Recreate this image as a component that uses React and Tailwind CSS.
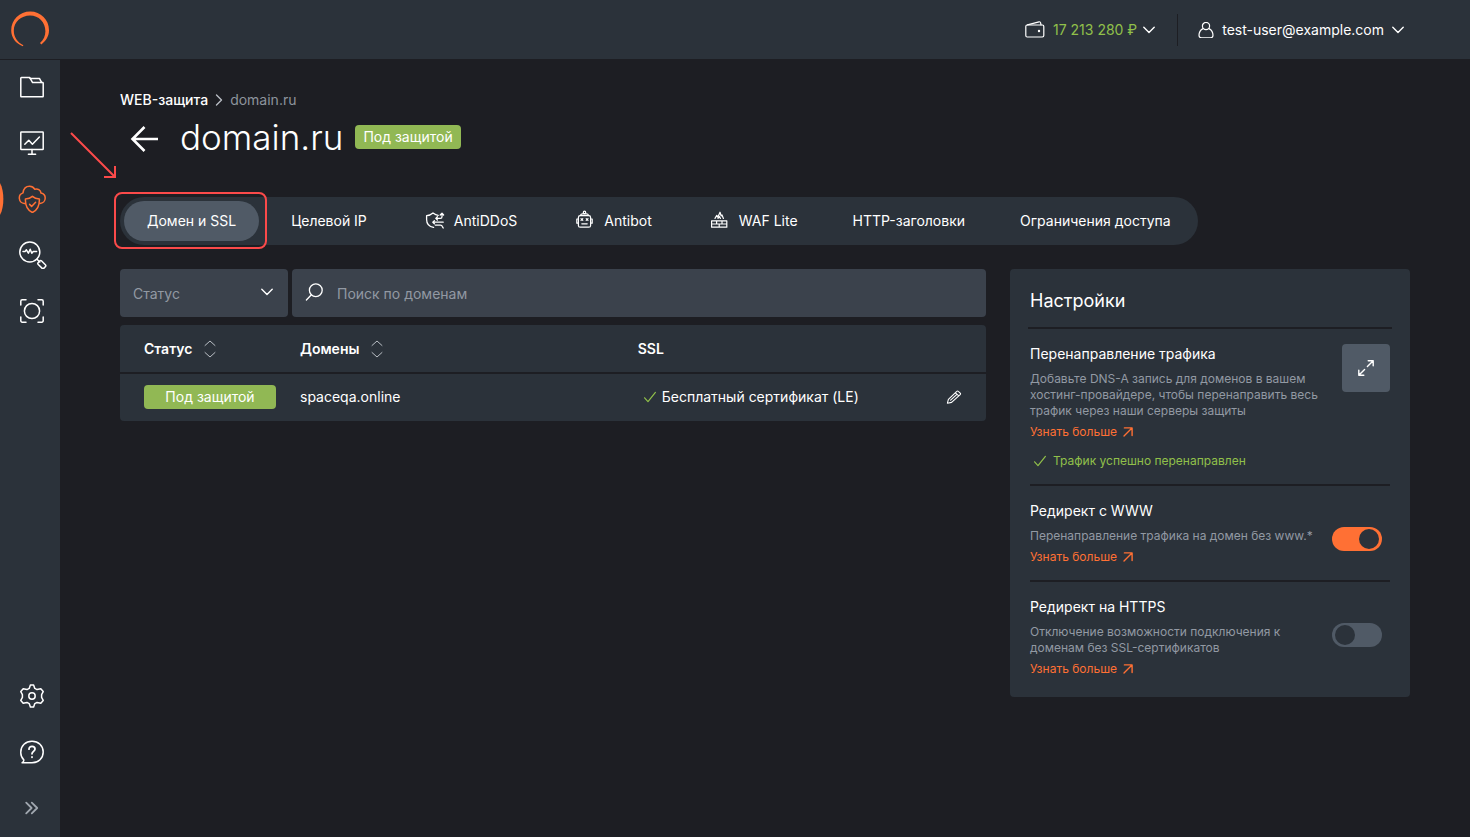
import { useState } from 'react';

function Icon({ size = 'size-6', box = 24, width = 1.5, className = '', children }) {
  return (
    <svg
      className={`shrink-0 ${size} ${className}`}
      viewBox={`0 0 ${box} ${box}`}
      fill="none"
      stroke="currentColor"
      strokeWidth={width}
      strokeLinecap="round"
      strokeLinejoin="round"
      aria-hidden="true"
    >
      {children}
    </svg>
  );
}

const ChevronDown = ({ className }) => (
  <Icon size="size-3" box={12} width={1.4} className={className}>
    <path d="M0.8 3.2 6 8.4l5.2-5.2" />
  </Icon>
);

const Check = ({ className }) => (
  <Icon size="size-3" box={12} width={1.2} className={className}>
    <path d="M0.6 6.8 4 10.6 11.4 1.4" />
  </Icon>
);

const topNav = [
  {
    name: 'Проекты',
    icon: (
      <Icon>
        <path d="M.8 21.2V3.200a.6.6 0 0 1 .6-.6h8.400l2.800 5h10a.6.6 0 0 1 .6.6v13a.6.6 0 0 1-.6.6H1.400a.6.6 0 0 1-.6-.6Z" />
        <path d="M10 3.400h9.400L21.600 7.400" />
      </Icon>
    ),
  },
  {
    name: 'Мониторинг',
    icon: (
      <Icon>
        <rect x=".8" y="1" width="22.4" height="17.6" rx=".6" />
        <path d="M12 18.6v4.2M8.4 23.200h7.200M4.800 13.200l4-4 3.600 4L19.400 6" />
      </Icon>
    ),
  },
  {
    name: 'WEB-защита',
    active: true,
    icon: (
      <Icon size="size-7" box={28} className="-ml-0.5">
        <path d="M7.400 18.400H6.400A5.400 5.400 0 0 1 5 7.900C5.600 3.600 8.400 1.300 11.600 1.300c2.400 0 4 1.100 5 2.900 3-1 6.200.8 6.400 3.900 2.700.6 4.200 2.600 4.200 5 0 2.900-2.200 5.300-5.200 5.300" />
        <path d="M14.400 11.400c1.800 1.700 4.200 2.500 7 2.500.2 6-1.500 11.200-7 13.600-5.500-2.400-7.200-7.600-7-13.600 2.800 0 5.200-.8 7-2.500Z" />
        <path d="m11.600 19.400 2 2 4-4.200" />
      </Icon>
    ),
  },
  {
    name: 'Анализ',
    icon: (
      <Icon size="size-7" box={28} className="-ml-px">
        <circle cx="10.8" cy="11" r="10" />
        <path d="m18 18.200 2.800 2.800M4 10.600h2l1.400-1.800 2 3.400 1.800-4 1.600 4 1.400-1.600h3.400" />
        <rect x="20.400" y="19.600" width="4.800" height="8" rx="1.400" transform="rotate(-45 22.800 23.600)" />
      </Icon>
    ),
  },
  {
    name: 'Сканер',
    icon: (
      <Icon>
        <circle cx="12" cy="12" r="7.6" />
        <path d="M.8 6V2.200A1.400 1.400 0 0 1 2.200.8H6M18 .8h3.800a1.400 1.400 0 0 1 1.400 1.400V6M23.200 18v3.800a1.400 1.400 0 0 1-1.400 1.400H18M6 23.200H2.200a1.400 1.400 0 0 1-1.400-1.400V18" />
      </Icon>
    ),
  },
];

const bottomNav = [
  {
    name: 'Настройки аккаунта',
    icon: (
      <Icon>
        <path d="M10.400 1h3.200l1.200 3.400L17 5.600l3.800-.8 2.400 2.800-1.600 3v2.800l1.600 3-2.400 2.800-3.800-.8-2.200 1.200-1.200 3.400h-3.200l-1.200-3.400L7 18.400l-3.800.8-2.400-2.800 1.600-3v-2.800l-1.600-3 2.400-2.800 3.800.8 2.200-1.200Z" />
        <circle cx="12" cy="12" r="3.200" />
      </Icon>
    ),
  },
  {
    name: 'Помощь',
    icon: (
      <Icon>
        <path d="M2 22.800c1.500-.8 2-1.600 1.800-2.900A10 10 0 0 1 .8 12C.8 5.800 5.600 1.200 12 1.200S23.200 5.800 23.200 12 18.400 22.800 12 22.800Z" />
        <path strokeWidth="1.8" d="M9 9.200C9 7.400 10.200 6.400 12 6.400s3 1 3 2.700c0 2.200-3 2.300-3 4.700M12 17v.3" />
      </Icon>
    ),
  },
  {
    name: 'Развернуть меню',
    muted: true,
    icon: (
      <Icon width={1.8}>
        <path d="m6.200 6.600 5.400 5.400-5.400 5.400M11.800 6.600l5.400 5.400-5.400 5.400" />
      </Icon>
    ),
  },
];

const tabs = [
  { name: 'Домен и SSL' },
  { name: 'Целевой IP' },
  {
    name: 'AntiDDoS',
    icon: (
      <Icon width={1.3}>
        <path d="M11.600 18.400C7.400 17.600 4.600 14.400 4.600 10.400V6.600c2.600 0 4.600-1 6.400-2.600 1.800 1.400 3.200 2.200 5.200 2.400" />
        <path d="M18.200 6l1.800-1.800L21.600 6M20 4.400v3.400c0 1-.6 1.600-1.600 1.600h-4.600M15.400 7.800l-1.600 1.600 1.600 1.600" />
        <path d="M10.800 13.200h10.400M12.400 11.600l-1.600 1.600 1.600 1.600M13.400 16.200h5c1 0 1.600.4 2 1.400l.8 1.400" />
      </Icon>
    ),
  },
  {
    name: 'Antibot',
    icon: (
      <Icon width={1.2}>
        <rect x="6.400" y="6.600" width="12.200" height="11.600" rx="1.800" />
        <path d="M6.400 10H4.800v4.200h1.600M18.600 10h1.600v4.200h-1.600M9.800 14.800h5.400M9 9.600l1.800 1.800M10.800 9.600 9 11.400M14.200 9.600l1.800 1.800M16 9.600l-1.800 1.800M8.400 6.400c.4-1.200 1-1.600 2-1.600h4.200c1 0 1.600.4 2 1.600" />
        <circle cx="12.500" cy="3.400" r="1.200" />
      </Icon>
    ),
  },
  {
    name: 'WAF Lite',
    icon: (
      <Icon width={1.2}>
        <path d="M4.600 11.800h15.200v6.400H4.600ZM4.600 15h15.200M9.600 11.800V15M15 11.800V15M12.200 15v3.200" />
        <path d="M8 9.400l1.800-3 1 1.800 2.200-5 1.200 3.800.8-1 1.400 3.400" />
        <path d="m11 9.400 1.200-2 1.200 2" />
      </Icon>
    ),
  },
  { name: 'HTTP-заголовки' },
  { name: 'Ограничения доступа' },
];

function SidebarItem({ item }) {
  return (
    <a
      href="#"
      aria-label={item.name}
      className={`relative flex h-14 items-center pl-5 ${
        item.active ? 'text-[#ff7034]' : item.muted ? 'text-[#a0a7af]' : 'text-white'
      }`}
    >
      {item.active && (
        <svg className="absolute left-0 top-3 h-8 w-1" viewBox="0 0 4 32" aria-hidden="true">
          <path d="M0 0c4.500 8 4.500 24 0 32Z" fill="#ff7034" />
        </svg>
      )}
      {item.icon}
    </a>
  );
}

function StatusBadge({ className = '' }) {
  return (
    <span
      className={`flex h-6 items-center justify-center rounded bg-[#91b854] px-2 text-sm text-white ${className}`}
    >
      Под защитой
    </span>
  );
}

function SortButton({ children }) {
  return (
    <button type="button" className="flex items-center gap-2 font-semibold">
      {children}
      <Icon width={1} size="size-5" box={20} className="text-[#b9bec4]">
        <path d="m5 6.500 5-4.500 5 4.500M5 13.500l5 4.500 5-4.500" />
      </Icon>
    </button>
  );
}

function LearnMore() {
  return (
    <a href="#" className="mt-[5px] flex w-fit items-center gap-1.5 text-xs/4 text-[#ff7034]">
      Узнать больше
      <Icon size="size-2.5" box={10} width={1.4}>
        <path d="M1 9 9 1M1.400.9h7.700v7.700" />
      </Icon>
    </a>
  );
}

function Toggle({ label, checked, onChange }) {
  return (
    <input
      type="checkbox"
      role="switch"
      aria-label={label}
      checked={checked}
      onChange={(e) => onChange(e.target.checked)}
      className="mr-2 mt-[26px] h-6 w-[50px] shrink-0 cursor-pointer appearance-none rounded-full bg-[#505a66] px-[3px] py-0.5 before:block before:size-5 before:rounded-full before:bg-[#2b323a] checked:bg-[#ff7034] checked:before:ml-6"
    />
  );
}

export default function App() {
  const [activeTab, setActiveTab] = useState('Домен и SSL');
  const [search, setSearch] = useState('');
  const [wwwRedirect, setWwwRedirect] = useState(true);
  const [httpsRedirect, setHttpsRedirect] = useState(false);

  return (
    <div className="flex min-h-screen flex-col bg-[#1d1e23] font-['Inter',sans-serif] text-sm text-white">
      <header className="relative flex h-[59px] items-center justify-between bg-[#2b323a] pl-2.5 pr-[66px] shadow-[0_1px_0_#1d1e23]">
        <a href="#" aria-label="Главная">
          <svg className="size-10" viewBox="0 0 40 40" aria-hidden="true">
            <path
              d="M12.800 36.200C5.700 33.200 1.200 27.600 1.200 20.400 1.200 9.800 9.600 1.600 20.200 1.600S39 9.800 39 20.200c0 5.800-3 10.600-7.700 14.200l-1.300-1.500C33.600 29.800 35.400 25.800 35.400 21.200 35.400 12.400 28.800 5.600 20 5.600S3.800 12 3.800 20.600c0 6.600 3.700 11.900 9.600 14.700Z"
              fill="#ff7034"
            />
          </svg>
        </a>
        <div className="flex items-center">
          <button type="button" className="flex items-center gap-1.5 text-[#91c04a]">
            <Icon size="size-5" box={20} width={1.2} className="mr-0.5 text-white">
              <rect x=".8" y="5" width="18" height="12" rx="1.4" />
              <path d="M2.400 4.800 14 1.800c.8-.2 1.400.2 1.600 1l.4 2" />
              <circle cx="14" cy="11" r=".6" fill="currentColor" />
            </Icon>
            <span>17 213 280 ₽</span>
            <ChevronDown className="text-white" />
          </button>
          <div className="ml-[22px] mr-5 h-8 w-px bg-[#1d1e23]" />
          <button type="button" className="flex items-center gap-2">
            <Icon size="size-4" box={16} width={1.2}>
              <circle cx="8" cy="4" r="3.6" />
              <path d="M5 6.600C2.400 8 1 10.600 1 13.200c0 1.800.8 2.600 2.600 2.600h8.800c1.800 0 2.600-.8 2.600-2.600C15 10.600 13.600 8 11 6.600" />
            </Icon>
            test-user@example.com
            <ChevronDown />
          </button>
        </div>
      </header>

      <div className="flex flex-1">
        <nav className="flex w-[60px] shrink-0 flex-col justify-between bg-[#2b323a] pb-px">
          <div>
            {topNav.map((item) => (
              <SidebarItem key={item.name} item={item} />
            ))}
          </div>
          <div>
            {bottomNav.map((item) => (
              <SidebarItem key={item.name} item={item} />
            ))}
          </div>
        </nav>

        <main className="min-w-0 flex-1 px-[60px] pt-[31px]">
          <div className="flex h-5 items-center gap-[3px]">
            <a href="#" className="font-medium">WEB-защита</a>
            <Icon size="size-4" box={16} width={1.4} className="text-[#b9bec4]">
              <path d="m5.500 3 5 5-5 5" />
            </Icon>
            <span className="text-[#8d949d]">domain.ru</span>
          </div>

          <div className="mt-[7px] flex h-10 items-center">
            <a href="#" aria-label="Назад" className="ml-2.5 pt-1">
              <Icon size="size-7" box={28} width={2.6}>
                <path strokeLinecap="butt" strokeLinejoin="miter" d="M28 14H2.500M14.500 2l-12 12 12 12" />
              </Icon>
            </a>
            <h1 className="ml-[22px] text-[35px]/10 font-light">domain.ru</h1>
            <StatusBadge className="ml-3" />
          </div>

          <div className="relative mt-10 w-fit">
            <div className="flex h-12 items-center gap-[9px] rounded-full bg-[#2b323a] p-1">
              {tabs.map((tab) => (
                <button
                  key={tab.name}
                  type="button"
                  onClick={() => setActiveTab(tab.name)}
                  className={`flex h-10 items-center gap-2 whitespace-nowrap rounded-full px-[23px] ${
                    activeTab === tab.name ? 'bg-[#505a66]' : ''
                  }`}
                >
                  {tab.icon}
                  {tab.name}
                </button>
              ))}
            </div>
            {/* callout around the first tab */}
            <div className="pointer-events-none absolute -left-1.5 -top-[5px] h-[57px] w-[153px] rounded-lg border-2 border-[#fb4a4a]" />
            <svg
              className="pointer-events-none absolute -left-[50px] -top-[66px] size-12"
              viewBox="0 0 48 48"
              fill="none"
              stroke="#fb4a4a"
              strokeWidth="2"
              aria-hidden="true"
            >
              <path d="m1 2 43 43M34 46h11V35" />
            </svg>
          </div>

          <div className="mt-6 flex items-start gap-6">
            <section className="min-w-0 flex-1">
              <div className="flex gap-1">
                <div className="relative w-[168px] shrink-0">
                  <select
                    aria-label="Статус"
                    className="h-12 w-full appearance-none rounded bg-[#3b424c] px-[13px] pt-0.5 text-[#9299a3]"
                  >
                    <option>Статус</option>
                    <option>Под защитой</option>
                  </select>
                  <ChevronDown className="pointer-events-none absolute right-[15px] top-[17px]" />
                </div>
                <label className="flex h-12 flex-1 items-center gap-3 rounded bg-[#3b424c] px-[13px]">
                  <Icon size="size-5" box={20} width={1.3}>
                    <circle cx="10.8" cy="7.200" r="6.400" />
                    <path d="m6.400 11.800-5 5.200" />
                  </Icon>
                  <input
                    type="text"
                    aria-label="Поиск по доменам"
                    placeholder="Поиск по доменам"
                    value={search}
                    onChange={(e) => setSearch(e.target.value)}
                    className="min-w-0 flex-1 bg-transparent pt-0.5 outline-none placeholder:text-[#9299a3]"
                  />
                </label>
              </div>

              <table className="mt-2 w-full table-fixed overflow-hidden rounded bg-[#2b323a] text-left">
                <thead>
                  <tr className="h-12 border-b-2 border-[#1d1e23]">
                    <th className="w-[156px] pl-6"><SortButton>Статус</SortButton></th>
                    <th className="w-[39%] pl-6"><SortButton>Домены</SortButton></th>
                    <th className="pl-6 font-semibold">SSL</th>
                    <th className="w-16" aria-label="Действия" />
                  </tr>
                </thead>
                <tbody>
                  <tr className="h-12 [&>td]:pb-0.5">
                    <td className="pl-6"><StatusBadge /></td>
                    <td className="pl-6">spaceqa.online</td>
                    <td className="pl-[30px]">
                      <div className="flex items-center gap-1.5">
                        <Check className="text-[#91c04a]" />
                        Бесплатный сертификат (LE)
                      </div>
                    </td>
                    <td>
                      <button type="button" aria-label="Изменить" className="mx-auto block">
                        <Icon size="size-4" box={16} width={1.1}>
                          <path d="m1.400 14.200 1-3.800L10.800 2.400c.5-.5 1-.5 1.500 0l1.900 1.700c.5.5.5 1 0 1.500l-8.600 7.800ZM9.400 3.800l3.400 3M4.600 11.200l5.800-5.400" />
                        </Icon>
                      </button>
                    </td>
                  </tr>
                </tbody>
              </table>
            </section>

            <aside className="w-[400px] shrink-0 rounded bg-[#2b323a] p-5">
              <h2 className="-mx-0.5 border-b-2 border-[#1d1e23] px-0.5 pb-3.5 text-lg/6">Настройки</h2>

              <section className="flex justify-between border-b-2 border-[#1d1e23] pb-[15px] pt-[15px]">
                <div>
                  <h3 className="leading-5">Перенаправление трафика</h3>
                  <p className="mt-[7px] max-w-[292px] text-xs/4 text-[#9299a3]">
                    Добавьте DNS-A запись для доменов в вашем хостинг-провайдере, чтобы перенаправить весь
                    трафик через наши серверы защиты
                  </p>
                  <LearnMore />
                  <p className="mt-[13px] flex items-center gap-[7px] pl-1 text-xs/4 text-[#91c04a]">
                    <Check />
                    Трафик успешно перенаправлен
                  </p>
                </div>
                <button
                  type="button"
                  aria-label="Развернуть"
                  className="flex size-12 items-center justify-center rounded bg-[#505a66]"
                >
                  <Icon size="size-4" box={16} width={1.4}>
                    <path d="M9.400 6.600 15 1M10.200.8h5v5M6.600 9.400 1 15M.8 10.200v5h5" />
                  </Icon>
                </button>
              </section>

              <section className="flex justify-between border-b-2 border-[#1d1e23] pb-[15px] pt-[15px]">
                <div>
                  <h3 className="leading-5">Редирект с WWW</h3>
                  <p className="mt-[7px] text-xs/4 text-[#9299a3]">Перенаправление трафика на домен без www.*</p>
                  <LearnMore />
                </div>
                <Toggle label="Редирект с WWW" checked={wwwRedirect} onChange={setWwwRedirect} />
              </section>

              <section className="flex justify-between pt-[15px]">
                <div>
                  <h3 className="leading-5">Редирект на HTTPS</h3>
                  <p className="mt-[7px] max-w-[270px] text-xs/4 text-[#9299a3]">
                    Отключение возможности подключения к доменам без SSL-сертификатов
                  </p>
                  <LearnMore />
                </div>
                <Toggle label="Редирект на HTTPS" checked={httpsRedirect} onChange={setHttpsRedirect} />
              </section>
            </aside>
          </div>
        </main>
      </div>
    </div>
  );
}
